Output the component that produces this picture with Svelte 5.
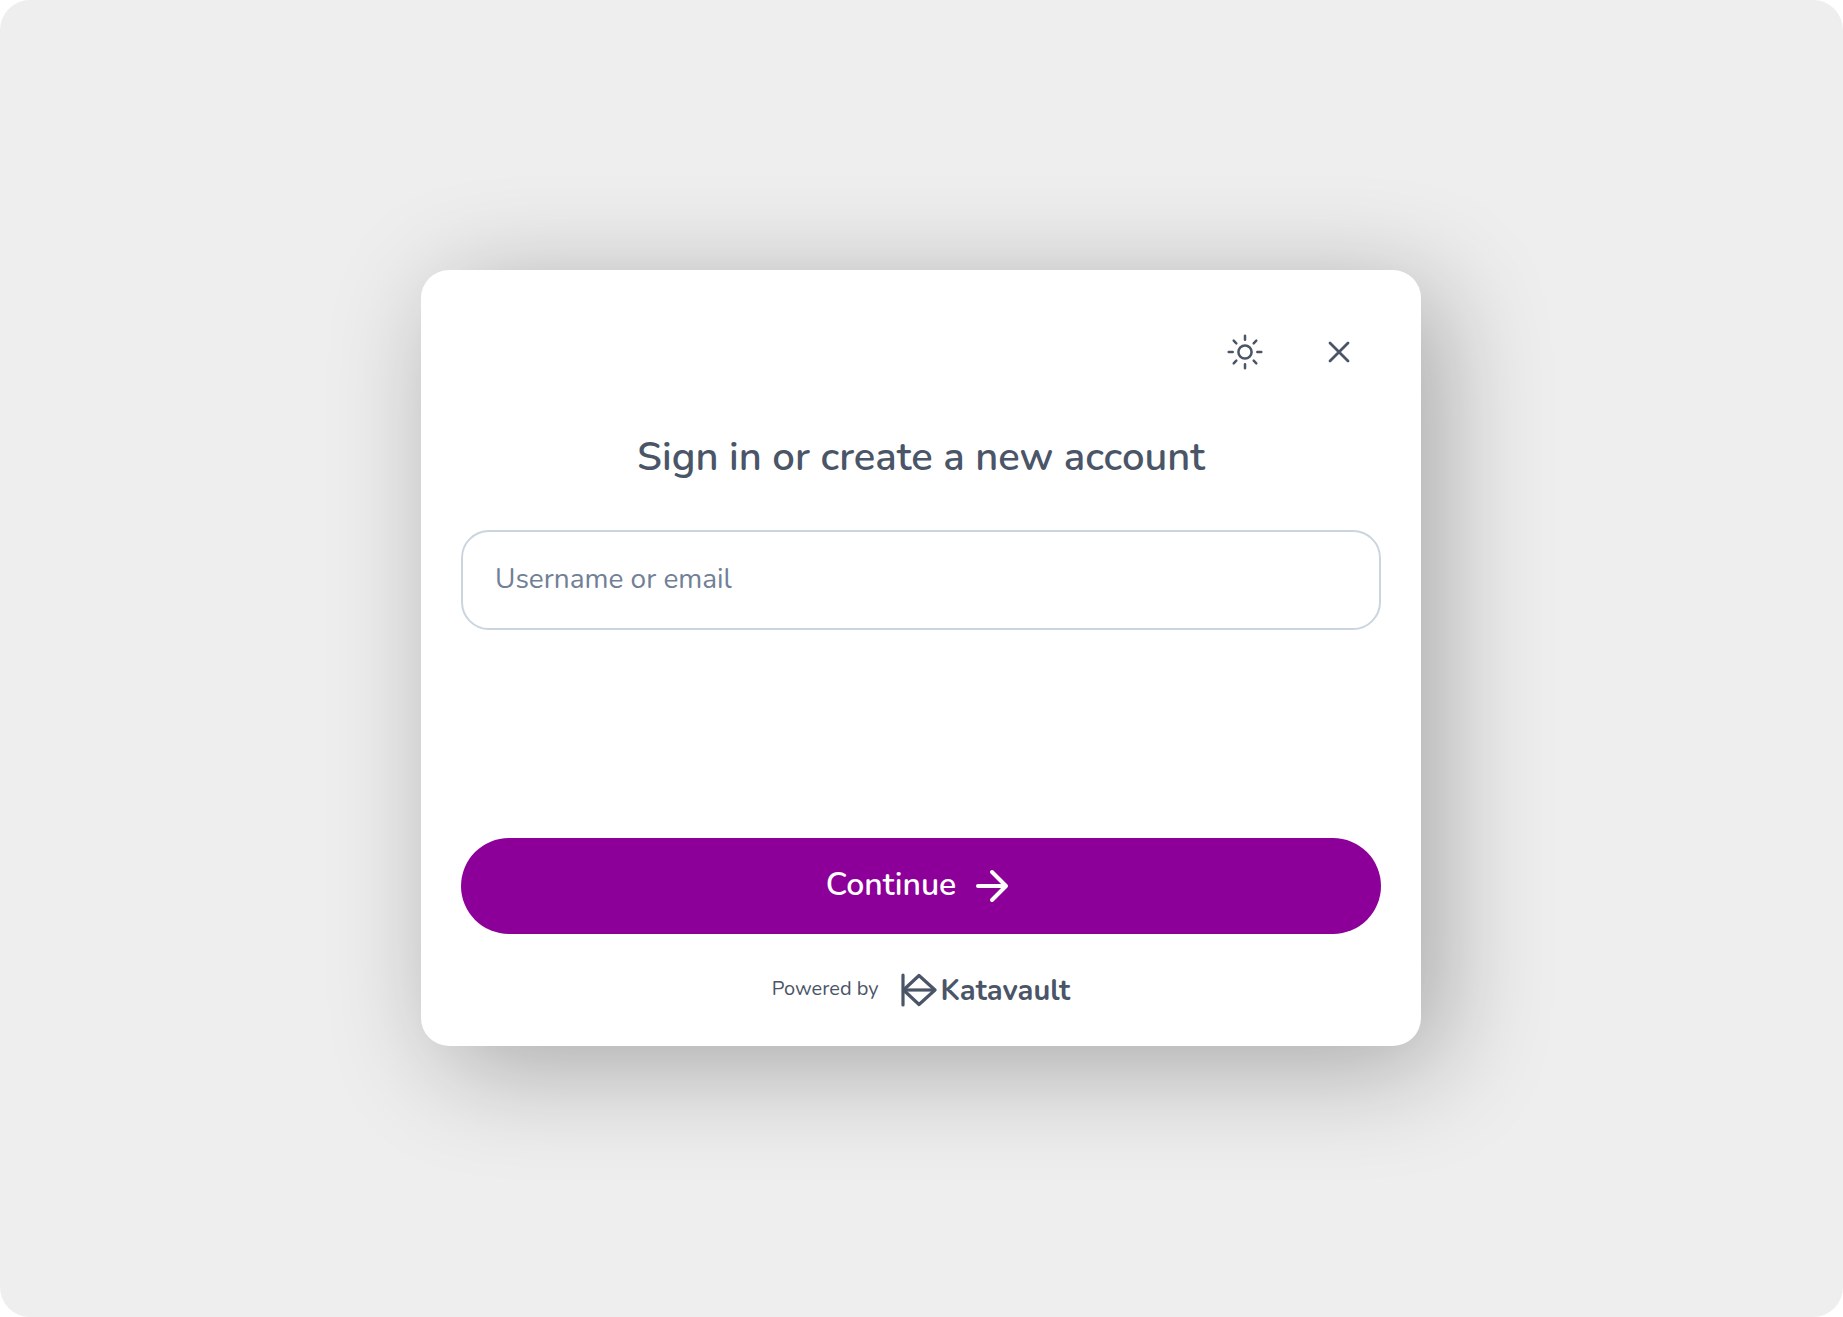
<script>
  let identifier = $state('');
</script>

<main class="backdrop">
  <form class="card" onsubmit={(e) => e.preventDefault()}>
    <div class="actions">
      <button class="icon-button" type="button" aria-label="Toggle theme">
        <svg width="36" height="36" viewBox="0 0 36 36" fill="none" stroke="currentColor" stroke-width="2.5" stroke-linecap="round">
          <circle cx="18" cy="18" r="6.600" />
          <path d="M18 1.700v4M18 30.300v4M1.700 18h4M30.300 18h4M6.700 6.700l2.600 2.600M26.700 26.700l2.600 2.600M6.700 29.300l2.600-2.600M26.700 9.300l2.600-2.600" />
        </svg>
      </button>
      <button class="icon-button" type="button" aria-label="Close">
        <svg width="36" height="36" viewBox="0 0 36 36" fill="none" stroke="currentColor" stroke-width="2.800" stroke-linecap="round">
          <path d="M9 9l18 18M27 9L9 27" />
        </svg>
      </button>
    </div>

    <h1>Sign in or create a new account</h1>

    <input
      type="text"
      aria-label="Username or email"
      placeholder="Username or email"
      autocomplete="username"
      bind:value={identifier}
    />

    <button class="continue" type="submit">
      <span>Continue</span>
      <svg width="36" height="36" viewBox="0 0 36 36" fill="none" stroke="currentColor" stroke-width="4" stroke-linecap="round" stroke-linejoin="round">
        <path d="M4 18h28M18 4l14 14-14 14" />
      </svg>
    </button>

    <footer>
      <span class="powered">Powered by</span>
      <a class="brand" href="#katavault">
        <svg width="36" height="34" viewBox="0 0 36 34" fill="none" stroke="currentColor" stroke-width="3.200">
          <path d="M2 2v30" stroke-linecap="round" />
          <path d="M2.500 17L18 2.500 34 17 18 31.500z" stroke-linejoin="round" />
          <path d="M3 17h30" />
        </svg>
        <span>Katavault</span>
      </a>
    </footer>
  </form>
</main>

<style>
  :global(body) {
    background: #fff;
  }

  .backdrop {
    box-sizing: border-box;
    min-height: 100vh;
    padding: 40px 41px 41px 40px;
    display: flex;
    align-items: center;
    justify-content: center;
    background: #eee;
    border-radius: 30px;
    font-family: Nunito, Lato, sans-serif;
    color: #4a5568;
  }

  .card {
    box-sizing: border-box;
    width: 100%;
    max-width: 1000px;
    padding: 40px 40px 38px;
    display: flex;
    flex-direction: column;
    background: #fff;
    border-radius: 28px;
    box-shadow: 20px 20px 110px rgba(0, 0, 0, 0.3);
  }

  .actions {
    display: flex;
    justify-content: flex-end;
    gap: 14px;
    padding-right: 2px;
  }

  button {
    border: 0;
    padding: 0;
    font-family: inherit;
    cursor: pointer;
  }

  .icon-button {
    width: 80px;
    height: 84px;
    display: flex;
    align-items: center;
    justify-content: center;
    background: none;
    color: inherit;
  }

  h1 {
    margin: 36px 0 46px;
    font-size: 40px;
    line-height: 54px;
    font-weight: 600;
    text-align: center;
  }

  input {
    box-sizing: border-box;
    width: 100%;
    height: 100px;
    padding: 0 32px 2px;
    border: 2px solid #cbd5e0;
    border-radius: 28px;
    background: #fff;
    color: inherit;
    font-family: inherit;
    font-size: 28px;
  }

  input::placeholder {
    color: #718096;
    opacity: 1;
  }

  .continue {
    height: 96px;
    margin-top: 208px;
    display: flex;
    align-items: center;
    justify-content: center;
    gap: 18px;
    padding-right: 6px;
    border-radius: 48px;
    background: #8c0099;
    color: #fff;
    font-size: 32px;
    font-weight: 600;
  }

  .continue span {
    padding-bottom: 3px;
  }

  footer {
    margin-top: 38px;
    display: flex;
    align-items: center;
    justify-content: center;
    gap: 22px;
  }

  .powered {
    padding-bottom: 4px;
    font-size: 20px;
  }

  .brand {
    display: flex;
    align-items: center;
    gap: 4px;
    color: inherit;
    font-size: 29px;
    line-height: 34px;
    font-weight: 700;
    text-decoration: none;
  }

  .brand span {
    padding-top: 2px;
  }
</style>
